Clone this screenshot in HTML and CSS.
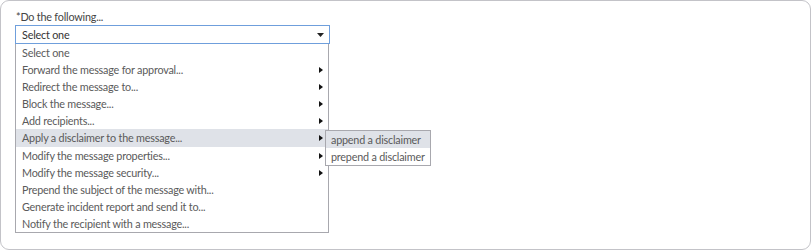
FILE: index.html
```html
<!DOCTYPE html>
<html>
<head>
<meta charset="utf-8">
<link rel="stylesheet" href="styles.css">
</head>
<body>
<div class="panel">
  <div class="label">*Do the following...</div>
  <div class="combo">
    <div class="select">
      <span>Select one</span>
      <svg class="caret" width="7" height="4" viewBox="0 0 7 4"><path d="M0 0H7L3.5 4Z" fill="#222"/></svg>
    </div>
    <ul class="list">
      <li>Select one</li>
      <li class="sub">Forward the message for approval...</li>
      <li class="sub">Redirect the message to...</li>
      <li class="sub">Block the message...</li>
      <li class="sub">Add recipients...</li>
      <li class="sub active">Apply a disclaimer to the message...</li>
      <li class="sub">Modify the message properties...</li>
      <li class="sub">Modify the message security...</li>
      <li>Prepend the subject of the message with...</li>
      <li>Generate incident report and send it to...</li>
      <li>Notify the recipient with a message...</li>
    </ul>
    <ul class="submenu">
      <li class="active">append a disclaimer</li>
      <li>prepend a disclaimer</li>
    </ul>
  </div>
</div>
</body>
</html>
```
FILE: styles.css
```css
html, body {
  margin: 0;
  padding: 0;
  background: #ffffff;
}
.panel {
  box-sizing: border-box;
  width: 811px;
  height: 250px;
  border: 1px solid #c3c3c8;
  border-radius: 9px;
  padding: 8px 14px;
  font-family: Lato, "Noto Sans", sans-serif;
  font-size: 10.8px;
  letter-spacing: -0.2px;
  color: #5a5a5a;
}
.label {
  padding-left: 1px;
  height: 15px;
  line-height: 15px;
  color: #444;
}
.combo {
  position: relative;
  width: 315px;
  margin-top: 1px;
}
.select {
  box-sizing: border-box;
  height: 19px;
  border: 1px solid #6f9fdc;
  display: flex;
  align-items: center;
  justify-content: space-between;
  padding: 0 5px 0 6px;
  color: #333;
}
.caret {
  display: block;
}
.list {
  list-style: none;
  margin: 0;
  padding: 0;
  box-sizing: border-box;
  border: 1px solid #a8a8ae;
  border-top: none;
  width: 314px;
}
.list li {
  height: 17.1px;
  line-height: 17px;
  padding-left: 6px;
  position: relative;
  white-space: nowrap;
}
.list li.active {
  background: #dfe2e8;
}
.list li.sub::after {
  content: "";
  position: absolute;
  right: 5px;
  top: 6px;
  border-left: 4px solid #111;
  border-top: 3.5px solid transparent;
  border-bottom: 3.5px solid transparent;
}
.submenu {
  list-style: none;
  margin: 0;
  padding: 0;
  position: absolute;
  left: 310px;
  top: 105px;
  box-sizing: border-box;
  width: 106px;
  border: 1px solid #a8a8ae;
  background: #fff;
}
.submenu li {
  height: 17px;
  line-height: 17px;
  padding-left: 5px;
  white-space: nowrap;
}
.submenu li.active {
  background: #dfe2e8;
}
```
